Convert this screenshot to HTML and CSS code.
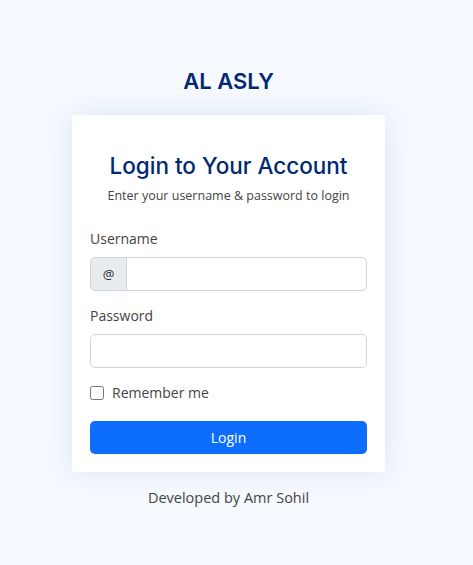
FILE: index.html
```html
<!DOCTYPE html>
<html lang="en">
<head>
    <meta charset="UTF-8">
    <meta name="viewport" content="width=device-width, initial-scale=1.0">
    <title>Login - AL ASLY</title>
    <link rel="stylesheet" href="styles.css">
</head>
<body>
    <main class="login-page">
        <!-- Logo -->
        <div class="logo">AL ASLY</div>

        <!-- Login Card -->
        <div class="card">
            <h2 class="card-title">Login to Your Account</h2>
            <p class="card-subtitle">Enter your username &amp; password to login</p>

            <form class="login-form">
                <div class="field">
                    <label for="username">Username</label>
                    <div class="input-group">
                        <span class="input-addon">@</span>
                        <input type="text" id="username">
                    </div>
                </div>

                <div class="field">
                    <label for="password">Password</label>
                    <input type="password" id="password">
                </div>

                <label class="check">
                    <input type="checkbox">
                    <span>Remember me</span>
                </label>

                <button type="submit">Login</button>
            </form>
        </div>

        <div class="credits">Developed by Amr Sohil</div>
    </main>
</body>
</html>
```

FILE: styles.css
```css
body {
    margin: 0;
    padding: 0;
    background-color: #f6f9ff; /* Very light blue */
    font-family: "Open Sans", sans-serif;
    color: #444444;
}
.login-page {
    display: flex;
    flex-direction: column;
    align-items: center;
    padding: 67px 16px 0 0;
}
.logo {
    font-family: "Inter", "Noto Sans", sans-serif;
    font-size: 22px;
    font-weight: 600;
    color: #012970; /* Navy */
    line-height: 28px;
    margin-bottom: 20px;
}
.card {
    width: 277px;
    padding: 36px 18px 18px;
    background-color: #ffffff;
    border-radius: 4px;
    box-shadow: 0 0 30px rgba(1, 41, 112, 0.1);
}
.card-title {
    margin: 0;
    text-align: center;
    font-family: "Inter", "Noto Sans", sans-serif;
    font-size: 22.5px;
    font-weight: 500;
    line-height: 30px;
    color: #012970;
}
.card-subtitle {
    margin: 6px 0 0;
    text-align: center;
    font-size: 12.5px;
    line-height: 18px;
}
.login-form {
    margin-top: 24px;
}
.field {
    margin-bottom: 15px;
}
.field label {
    display: block;
    font-size: 14px;
    line-height: 20px;
    margin-bottom: 8px;
}
input[type="text"],
input[type="password"] {
    box-sizing: border-box;
    width: 100%;
    height: 34px;
    border: 1px solid #ced4da;
    border-radius: 5px;
    padding: 0 12px;
    font-size: 14px;
    font-family: inherit;
}
.input-group {
    display: flex;
}
.input-group input {
    border-top-left-radius: 0;
    border-bottom-left-radius: 0;
    margin-left: -1px;
}
.input-addon {
    flex: none;
    box-sizing: border-box;
    width: 37px;
    height: 34px;
    display: flex;
    align-items: center;
    justify-content: center;
    background-color: #e9ecef;
    border: 1px solid #ced4da;
    border-radius: 5px 0 0 5px;
    font-size: 13px;
    color: #212529;
}
.check {
    display: flex;
    align-items: center;
    gap: 8px;
    font-size: 14px;
    line-height: 20px;
    margin: 2px 0 18px;
}
.check input {
    margin: 0;
    width: 14px;
    height: 14px;
    accent-color: #0d6efd;
}
button {
    display: block;
    width: 100%;
    height: 33px;
    background-color: #0d6efd; /* Bootstrap blue */
    color: white;
    border: none;
    border-radius: 5px;
    font-family: inherit;
    font-size: 14px;
    cursor: pointer;
}
button:hover {
    background-color: #0b5ed7;
}
.credits {
    margin-top: 16px;
    font-size: 14.5px;
    color: #444444;
}
```
